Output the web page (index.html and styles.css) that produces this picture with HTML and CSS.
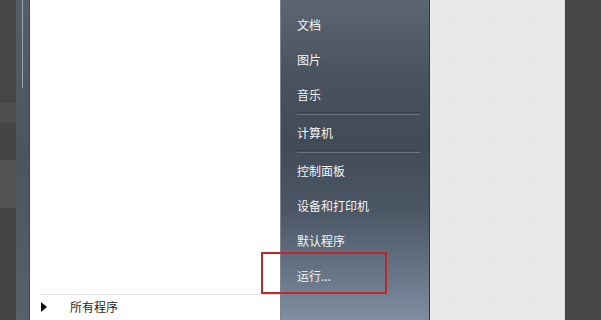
FILE: index.html
```html
<!DOCTYPE html>
<html lang="zh-CN">
<head>
<meta charset="utf-8">
<title>开始菜单</title>
<link rel="stylesheet" href="styles.css">
</head>
<body>
<div class="screen">
  <div class="desk-left">
    <div class="band b1"></div>
    <div class="band b2"></div>
    <div class="band b3"></div>
    <div class="band b4"></div>
    <div class="band b5"></div>
  </div>
  <div class="frame"><div class="frame-line"></div></div>
  <div class="programs">
    <div class="program-list"></div>
    <div class="all-programs">
      <span class="arrow"></span>
      <span class="all-label">所有程序</span>
    </div>
  </div>
  <div class="places">
    <div class="item">文档</div>
    <div class="item">图片</div>
    <div class="item">音乐</div>
    <div class="sep"></div>
    <div class="item">计算机</div>
    <div class="sep"></div>
    <div class="item">控制面板</div>
    <div class="item">设备和打印机</div>
    <div class="item">默认程序</div>
    <div class="item">运行...</div>
  </div>
  <div class="pattern"></div>
  <div class="desk-right"></div>
  <div class="highlight"></div>
</div>
</body>
</html>
```

FILE: styles.css
```css
html, body {
  margin: 0;
  padding: 0;
}
body {
  width: 601px;
  height: 320px;
  overflow: hidden;
  font-family: "Noto Sans CJK SC", "Noto Sans", sans-serif;
  font-size: 12px;
}
.screen {
  position: relative;
  display: flex;
  width: 601px;
  height: 320px;
}
.desk-left {
  width: 16px;
  display: flex;
  flex-direction: column;
  background: #474645;
}
.band { width: 100%; }
.b1 { height: 103px; background: #474645; }
.b2 { height: 20px; background: #4f4e4d; }
.b3 { height: 37px; background: #464544; }
.b4 { height: 48px; background: #555453; }
.b5 { flex: 1; background: #454443; }
.frame {
  width: 14px;
  background: linear-gradient(#555d66, #4c545e 50%, #57606b);
  border-right: 1px solid #3e454d;
  box-sizing: border-box;
  padding-left: 6px;
}
.frame-line {
  width: 1px;
  height: 88px;
  background: #9aa3ad;
}
.programs {
  width: 250px;
  background: #ffffff;
  display: flex;
  flex-direction: column;
}
.program-list { flex: 1; }
.all-programs {
  margin-left: 10px;
  height: 26px;
  border-top: 1px solid #dfe2e6;
  display: flex;
  align-items: center;
  padding-bottom: 1px;
  box-sizing: border-box;
}
.arrow {
  width: 0;
  height: 0;
  border-top: 5px solid transparent;
  border-bottom: 5px solid transparent;
  border-left: 6px solid #111;
  margin-left: 1px;
}
.all-label {
  margin-left: 23px;
  color: #1f1f1f;
  line-height: 16px;
}
.places {
  width: 150px;
  box-sizing: border-box;
  border-left: 1px solid #7c8691;
  border-right: 1px solid #2f3740;
  padding-top: 7px;
  background: linear-gradient(#5c6673 0, #48525e 25%, #414b57 45%, #4b5664 65%, #667485 85%, #7f8ea2 100%);
}
.item {
  height: 35px;
  line-height: 35px;
  padding-left: 16px;
  color: #f2f4f6;
  white-space: nowrap;
}
.sep {
  height: 3px;
  box-sizing: border-box;
  margin: 0 9px 0 16px;
  border-top: 1px solid #363f4a;
  border-bottom: 1px solid #69737f;
}
.pattern {
  width: 135px;
  background-color: #ededed;
  background-image:
    repeating-conic-gradient(#e6e6e6 0 25%, transparent 0 50%),
    linear-gradient(#ededed 0 15px, transparent 15px 24px, #ededed 24px),
    linear-gradient(90deg, transparent 18px, #e0e0e0 18px 19px, transparent 19px 21px, #e0e0e0 21px 22px, transparent 22px 24px, #e0e0e0 24px 25px, transparent 25px);
  background-size: 2px 2px, 40px 40px, 40px 40px;
  border-right: 1px solid #dadada;
  box-sizing: border-box;
}
.desk-right {
  flex: 1;
  background: #474747;
}
.highlight {
  position: absolute;
  left: 261px;
  top: 252px;
  width: 126px;
  height: 42px;
  box-sizing: border-box;
  border: 2px solid #c0262c;
}
```
